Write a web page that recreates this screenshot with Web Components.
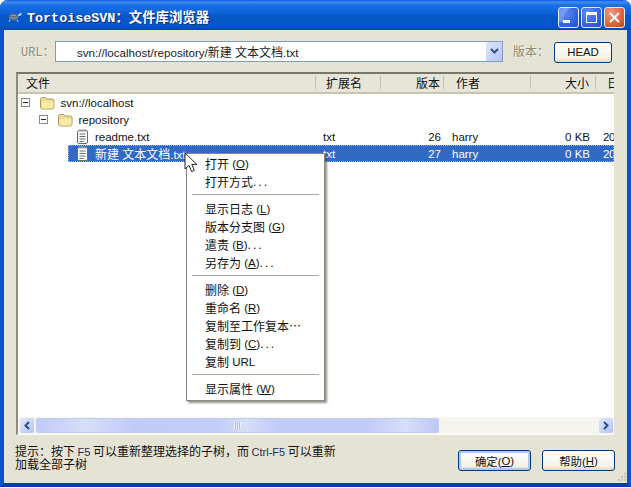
<!DOCTYPE html>
<html>
<head>
<meta charset="utf-8">
<title>TortoiseSVN</title>
<style>
  html, body { margin: 0; background: #fff; }
  body { width: 631px; height: 488px; overflow: hidden; font: 12px "Noto Sans CJK SC", sans-serif; }
</style>
</head>
<body>
<xp-window>
  <xp-titlebar>TortoiseSVN：文件库浏览器</xp-titlebar>
  <url-bar url="svn://localhost/repository/新建 文本文档.txt"></url-bar>
  <repo-list>
    <repo-row indent="3" expander icon="folder" name="svn://localhost"></repo-row>
    <repo-row indent="21" expander icon="folder" name="repository"></repo-row>
    <repo-row indent="50" icon="file" name="readme.txt" ext="txt" rev="26" author="harry" size="0 KB" date="20"></repo-row>
    <repo-row indent="50" icon="file" name="新建 文本文档.txt" ext="txt" rev="27" author="harry" size="0 KB" date="20" selected></repo-row>
  </repo-list>
  <dlg-footer>
    提示：按下<small> F5 </small>可以重新整理选择的子树，而<small> Ctrl-F5 </small>可以重新<br>加载全部子树
  </dlg-footer>
  <context-menu slot="overlay">
    <menu-item label="打开" key="O"></menu-item>
    <menu-item label="打开方式" tail="..."></menu-item>
    <menu-sep></menu-sep>
    <menu-item label="显示日志" key="L"></menu-item>
    <menu-item label="版本分支图" key="G"></menu-item>
    <menu-item label="遣责" key="B" tail="..."></menu-item>
    <menu-item label="另存为" key="A" tail="..."></menu-item>
    <menu-sep></menu-sep>
    <menu-item label="删除" key="D"></menu-item>
    <menu-item label="重命名" key="R"></menu-item>
    <menu-item label="复制至工作复本…"></menu-item>
    <menu-item label="复制到" key="C" tail="..."></menu-item>
    <menu-item label="复制" url=" URL"></menu-item>
    <menu-sep></menu-sep>
    <menu-item label="显示属性" key="W"></menu-item>
  </context-menu>
  <svg slot="overlay" class="pointer" width="14" height="22" viewBox="0 0 14 22" style="position:absolute;left:184px;top:152px">
    <path d="M1 1v16l4-3.600 2.600 6.200 2.800-1.200-2.600-6h5z" fill="#fff" stroke="#222" stroke-width="1"/>
  </svg>
</xp-window>

<script>
const CJK = '"Noto Sans CJK SC", sans-serif'
const UI = '"Liberation Sans", "Noto Sans CJK SC", sans-serif'
const MONO = '"Liberation Mono", "Noto Sans CJK SC", monospace'

function shadow(el, html) {
  el.attachShadow({ mode: "open" }).innerHTML = html
}

// the CJK runs are 12px, the latin around them a bit smaller
function cjkRuns(text) {
  return text.replace(/[\u4e00-\u9fff]+/g, m => `<span style="font-size:12px">${m}</span>`)
}

class XpWindow extends HTMLElement {
  connectedCallback() {
    shadow(this, `
      <style>
        :host {
          display: flex;
          flex-direction: column;
          position: relative;
          width: 631px;
          height: 487px;
          box-sizing: border-box;
          background: #e5e3d4;
          border: solid #0a53d0;
          border-width: 0 4px 4px;
          border-bottom-color: #0a3da6;
          border-radius: 8px 8px 0 0;
          color: #000;
        }
        .over { position: absolute; left: -4px; top: 0; }
      </style>
      <slot></slot>
      <div class="over"><slot name="overlay"></slot></div>
    `)
  }
}

class XpTitlebar extends HTMLElement {
  connectedCallback() {
    shadow(this, `
      <style>
        :host {
          display: flex;
          align-items: center;
          height: 30px;
          margin: 0 -4px;
          padding: 2px 6px 0 7px;
          box-sizing: border-box;
          border-radius: 8px 8px 0 0;
          background: linear-gradient(#0a5ae0 0, #3f8df0 2px, #1b70e6 5px, #0d62d8 13px, #0556c6 16px, #0558ca 25px, #0a4cb0 29px, #0a46a4 30px);
          color: #fff;
        }
        .logo { margin-right: 5px; }
        .title {
          flex: 1;
          font: bold 13.4px ${MONO};
          text-shadow: 1px 1px 0 #0a2f80;
          white-space: nowrap;
        }
        .btn {
          width: 21px;
          height: 21px;
          margin: 2px 0 0 2px;
          box-sizing: border-box;
          border: 1px solid #e4ecfa;
          border-radius: 3px;
          background: radial-gradient(circle at 30% 25%, #5d8cf0, #2f5fdc 70%, #2450c4);
          display: flex;
          align-items: center;
          justify-content: center;
        }
        .close { background: radial-gradient(circle at 30% 25%, #ef9a7c, #dc5a30 70%, #c23c16); }
      </style>
      <svg class="logo" width="15" height="11" viewBox="0 0 15 11">
        <ellipse cx="6.500" cy="6" rx="5" ry="3.600" fill="#5f6d84"/>
        <path d="M4 4.500h5M3 7h7" stroke="#8e9aae"/>
        <path d="M3 9l-1 1.500M10 9l1 1.500" stroke="#c6cfdb" stroke-width="1.200"/>
        <path d="M11 4l2-2h1.500v2l-3 1.500z" fill="#c3ccd8"/>
      </svg>
      <div class="title"><slot></slot></div>
      <div class="btn">
        <svg width="19" height="19" viewBox="0 0 19 19"><path d="M0 14V4Q0 0 5 0h6Q4 4 4 14z" fill="#8fb0f5" opacity=".55"/><rect x="4" y="12" width="7" height="3" fill="#fff"/></svg>
      </div>
      <div class="btn">
        <svg width="15" height="15" viewBox="0 0 15 15"><rect x="2.500" y="2.500" width="10" height="10" fill="none" stroke="#fff"/><rect x="2" y="2" width="11" height="3" fill="#fff"/></svg>
      </div>
      <div class="btn close">
        <svg width="15" height="15" viewBox="0 0 15 15"><path d="M3 3l9 9M12 3l-9 9" stroke="#fff" stroke-width="2"/></svg>
      </div>
    `)
  }
}

class UrlBar extends HTMLElement {
  connectedCallback() {
    shadow(this, `
      <style>
        :host {
          display: flex;
          align-items: center;
          height: 22px;
          margin: 10px 0 10px;
          padding-left: 17px;
        }
        .label {
          font: 12px ${MONO};
          color: #8c8a78;
          text-shadow: 1px 1px 0 #f6f5ec;
          white-space: nowrap;
        }
        .url { width: 34px; }
        .combo {
          width: 448px;
          height: 21px;
          box-sizing: border-box;
          margin-right: 10px;
          border: 1px solid #7f9db9;
          background: #fff;
          display: flex;
          align-items: center;
          padding-left: 21px;
          position: relative;
          font: 11.6px ${UI};
          color: #222;
        }
        .drop {
          margin-left: auto;
          width: 16px;
          height: 19px;
          background: linear-gradient(135deg, #dfe6fb, #b5c5f5);
          display: flex;
          align-items: center;
          justify-content: center;
        }
        .ver { width: 41px; }
        xp-button { margin-top: 2px; }
      </style>
      <span class="label url">URL：</span>
      <div class="combo">
        <span>${cjkRuns(this.getAttribute("url"))}</span>
        <div class="drop"><svg width="9" height="7" viewBox="0 0 9 7"><path d="M1 1l3.500 3.500L8 1" fill="none" stroke="#324f8e" stroke-width="2"/></svg></div>
      </div>
      <span class="label ver">版本：</span>
      <xp-button>HEAD</xp-button>
    `)
  }
}

class XpButton extends HTMLElement {
  connectedCallback() {
    shadow(this, `
      <style>
        :host {
          display: flex;
          align-items: center;
          justify-content: center;
          width: 58px;
          height: 21px;
          box-sizing: border-box;
          border: 1px solid #003c74;
          border-radius: 3px;
          background: linear-gradient(#fff, #f3f2ea 80%, #dcd8c8);
          font: 11.4px ${UI};
          color: #111;
        }
        :host([wide]) { width: 73px; }
        :host([primary]) {
          box-shadow: inset 0 0 0 2px #b4c8f0;
        }
      </style>
      <slot></slot>
    `)
  }
}

class RepoList extends HTMLElement {
  connectedCallback() {
    shadow(this, `
      <style>
        :host {
          display: flex;
          flex-direction: column;
          width: 598px;
          height: 363px;
          margin-left: 12px;
          box-sizing: border-box;
          background: #fff;
          border: solid #fdfdf8;
          border-width: 2px 0 1px 2px;
          border-top-color: #77766a;
          border-left-color: #8c8b7c;
          overflow: hidden;
          font: 11.5px ${UI};
        }
        .head {
          display: flex;
          height: 20px;
          flex: none;
          align-items: center;
          padding-bottom: 2px;
          background: #e7e5d7;
          border-bottom: 2px solid #c6c4b2;
          box-sizing: border-box;
          font: 12px/13px ${CJK};
          color: #111;
        }
        .head div {
          box-sizing: border-box;
          height: 13px;
          border-right: 1px solid #c4c2b2;
          flex: none;
          white-space: nowrap;
        }
        .c0 { width: 298px; padding-left: 8px; }
        .c1 { width: 65px; padding-left: 10px; }
        .c2 { width: 63px; padding-right: 3px; text-align: right; }
        .c3 { width: 87px; padding-left: 12px; }
        .c4 { width: 65px; padding-right: 6px; text-align: right; }
        .head .c5 { width: 18px; padding-left: 11px; border: 0; }
        .rows { flex: 1; }
      </style>
      <div class="head">
        <div class="c0">文件</div><div class="c1">扩展名</div><div class="c2">版本</div>
        <div class="c3">作者</div><div class="c4">大小</div><div class="c5">日</div>
      </div>
      <div class="rows"><slot></slot></div>
      <h-scroll></h-scroll>
    `)
  }
}

const FOLDER = `<svg width="16" height="14" viewBox="0 0 16 14">
  <path d="M1.500 3.500q0-2 2-2h3l1.500 1.500h5q2 0 2 2v6q0 2-2 2h-9.500q-2 0-2-2z" fill="#f4d98a" stroke="#a89a5e"/>
  <path d="M3 5.500h10.500q1 0 1 1v4.500q0 1.500-1.500 1.500h-9.500q-1 0-1-1z" fill="#fbe9a6"/>
</svg>`
const FILE = `<svg width="13" height="15" viewBox="0 0 13 15">
  <rect x="1.500" y="1.500" width="10" height="13" rx="1.500" fill="#fff" stroke="#6c6c66"/>
  <path d="M3 1.500h7" stroke="#9a9a92" stroke-width="2"/>
  <path d="M3.500 5h6M3.500 7.500h6M3.500 10h6M3.500 12.500h4" stroke="#5e6a72"/>
</svg>`

class RepoRow extends HTMLElement {
  connectedCallback() {
    const a = n => this.getAttribute(n) || ""
    const isFile = a("icon") == "file"
    shadow(this, `
      <style>
        :host {
          display: flex;
          align-items: center;
          height: 17px;
          padding-left: ${a("indent")}px;
          color: #111;
          white-space: nowrap;
        }
        .box {
          width: 9px;
          height: 9px;
          box-sizing: border-box;
          flex: none;
          margin-right: 9px;
          border: 1px solid #8c8c80;
          position: relative;
        }
        .box::after {
          content: "";
          position: absolute;
          left: 1px;
          top: 3px;
          width: 5px;
          height: 1px;
          background: #222;
        }
        .main {
          display: flex;
          align-items: center;
          height: 17px;
          flex: 1;
          min-width: 0;
          overflow: hidden;
        }
        :host([selected]) .main {
          background: #316ac5;
          color: #fff;
          outline: 1px dotted #9db4de;
          outline-offset: -1px;
        }
        .icon { display: flex; flex: none; margin: 0 6px 0 8px; }
        :host([expander]) .icon { margin: 0 5.500px 0 0; }
        .name { flex: 1; }
        .col { flex: none; box-sizing: border-box; }
        .ext { width: 65px; padding-left: 7px; }
        .rev { width: 63px; padding-right: 3px; text-align: right; }
        .author { width: 87px; padding-left: 8px; }
        .size { width: 65px; padding-right: 6px; text-align: right; }
        .date { width: 18px; padding-left: 7px; letter-spacing: -.5px; }
      </style>
      ${this.hasAttribute("expander") ? '<div class="box"></div>' : ""}
      <div class="main">
        <span class="icon">${isFile ? FILE : FOLDER}</span>
        <span class="name">${cjkRuns(a("name"))}</span>
        ${isFile ? `<span class="col ext">${a("ext")}</span><span class="col rev">${a("rev")}</span>
        <span class="col author">${a("author")}</span><span class="col size">${a("size")}</span>
        <span class="col date">${a("date")}</span>` : ""}
      </div>
    `)
  }
}

class HScroll extends HTMLElement {
  connectedCallback() {
    shadow(this, `
      <style>
        :host {
          display: flex;
          flex: none;
          height: 17px;
          background: #f5f4ee;
          align-items: stretch;
        }
        .arrow {
          width: 14px;
          flex: none;
          margin: 1px 1px;
          border-radius: 2px;
          background: linear-gradient(135deg, #e2e8fc, #b4c3f4);
          display: flex;
          align-items: center;
          justify-content: center;
        }
        .left { margin-left: 2px; }
        .thumb {
          width: 403px;
          margin: 1px 0 1px 1px;
          border: 1px solid #c2cdf0;
          border-radius: 2px;
          box-sizing: border-box;
          background: linear-gradient(90deg, #c0cbf8, #d6def9 12%, #c0cbf8 24%, #c2cdf8 45%, #d6def9 52%, #c0cbf8 60%, #c0cbf8 82%, #d6def9 92%, #bcc8f6);
          display: flex;
          align-items: center;
          justify-content: center;
        }
        .grip { width: 7px; height: 7px; background: repeating-linear-gradient(90deg, #eef1fd 0 1px, #a9b8ec 1px 2px); }
        .track { flex: 1; }
      </style>
      <div class="arrow left"><svg width="8" height="9" viewBox="0 0 8 9"><path d="M6 1L2.500 4.500 6 8" fill="none" stroke="#2c4a8c" stroke-width="2"/></svg></div>
      <div class="thumb"><div class="grip"></div></div>
      <div class="track"></div>
      <div class="arrow"><svg width="8" height="9" viewBox="0 0 8 9"><path d="M2 1l3.500 3.500L2 8" fill="none" stroke="#2c4a8c" stroke-width="2"/></svg></div>
    `)
  }
}

class DlgFooter extends HTMLElement {
  connectedCallback() {
    shadow(this, `
      <style>
        :host {
          display: flex;
          flex: 1;
          justify-content: space-between;
          padding: 11px 12px 0 11px;
          font: 12px/13px ${UI};
          color: #111;
        }
        .tip { width: 340px; white-space: nowrap; }
        ::slotted(small) { font-size: 11px; color: #1f2c55; word-spacing: -.5px; }
        .actions { display: flex; gap: 11px; padding-top: 4px; align-items: flex-start; }
        .grip { position: absolute; right: 0; bottom: 0; }
      </style>
      <div class="tip"><slot></slot></div>
      <div class="actions">
        <xp-button wide primary>确定(<u>O</u>)</xp-button>
        <xp-button wide>帮助(<u>H</u>)</xp-button>
      </div>
      <svg class="grip" width="12" height="12" viewBox="0 0 12 12">
        <path d="M9 2h2v2H9zM6 5h2v2H6zM9 5h2v2H9zM3 8h2v2H3zM6 8h2v2H6zM9 8h2v2H9z" fill="#c9c7b4"/>
      </svg>
    `)
  }
}

class ContextMenu extends HTMLElement {
  connectedCallback() {
    shadow(this, `
      <style>
        :host {
          display: block;
          position: absolute;
          left: 186px;
          top: 153px;
          width: 139px;
          height: 248px;
          box-sizing: border-box;
          padding: 2px 2px 3px;
          background: #fff;
          border: 1px solid #8a897c;
          box-shadow: 2px 2px 2px rgba(60, 60, 50, .55);
        }
      </style>
      <slot></slot>
    `)
  }
}

class MenuItem extends HTMLElement {
  connectedCallback() {
    const key = this.getAttribute("key")
    const tail = this.getAttribute("tail") || ""
    const url = this.getAttribute("url") || ""
    shadow(this, `
      <style>
        :host {
          display: flex;
          align-items: center;
          height: 18px;
          padding: 0 0 2px 16px;
          box-sizing: border-box;
          font: 12px/14px ${CJK};
          color: #111;
          white-space: pre;
        }
        .m { font: 11.5px/14px ${UI}; }
        .tail { font: 12px/14px ${UI}; letter-spacing: 2px; }
      </style>
      <span>${this.getAttribute("label")}</span>${key ? `<span class="m"> (<u>${key}</u>)</span>` : ""}${tail ? `<span class="tail">${tail}</span>` : ""}${url ? `<span class="m">${url}</span>` : ""}
    `)
  }
}

class MenuSep extends HTMLElement {
  connectedCallback() {
    shadow(this, `
      <style>
        :host { display: block; height: 9px; padding-top: 2px; box-sizing: border-box; margin: 0 3px; }
        div { border-top: 1px solid #a8a79a; }
      </style>
      <div></div>
    `)
  }
}

customElements.define("xp-window", XpWindow)
customElements.define("xp-titlebar", XpTitlebar)
customElements.define("url-bar", UrlBar)
customElements.define("xp-button", XpButton)
customElements.define("repo-list", RepoList)
customElements.define("repo-row", RepoRow)
customElements.define("h-scroll", HScroll)
customElements.define("dlg-footer", DlgFooter)
customElements.define("context-menu", ContextMenu)
customElements.define("menu-item", MenuItem)
customElements.define("menu-sep", MenuSep)
</script>
</body>
</html>
